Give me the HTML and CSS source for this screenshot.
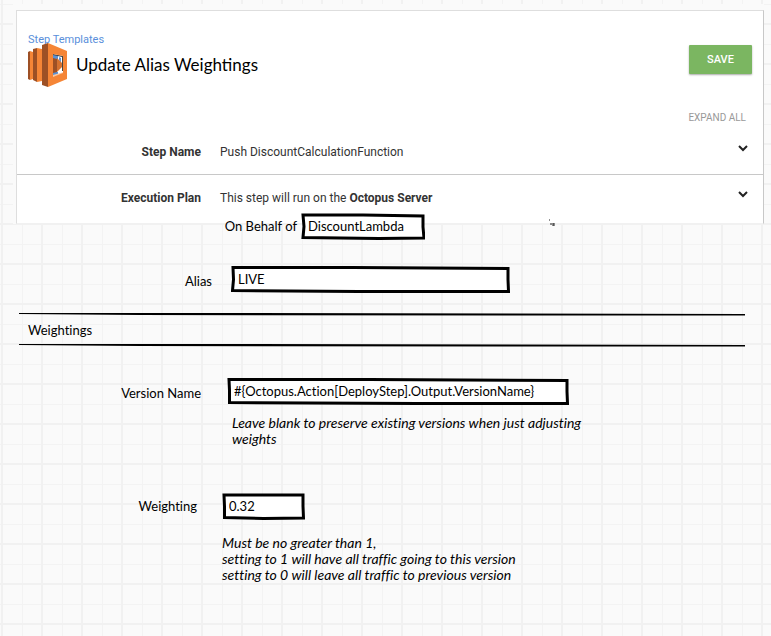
FILE: index.html
```html
<!DOCTYPE html>
<html lang="en">
<head>
<meta charset="utf-8">
<title>Update Alias Weightings</title>
<link rel="stylesheet" href="styles.css">
</head>
<body>
<div class="frame">
  <main class="card">
    <header class="head">
      <div class="intro">
        <a class="crumb" href="#">Step Templates</a>
        <div class="title">
          <svg class="logo" viewBox="0 0 39 44" aria-hidden="true">
            <path fill="#9d5025" d="M0 9l2-1v29l-2-1zM5 6l4-1v34l-4-2zM14 2l6-2v44l-6-2z"/>
            <path fill="#f58536" d="M2 8l3 1v27l-3 1zM9 5l5 1v32l-5 1z"/>
            <path fill="#fff" d="M24 10l12 3v18l-12 4z"/>
            <path fill="#5b91d3" d="M25 12h5v4h-5zM25 29h5v2l-5 3zM31 14l2 1v5l-2-3z"/>
            <path fill="#9d5025" d="M25 15l4 1v13l-4 1z"/>
            <path fill="#d5712f" d="M29 15l7 7-7 7z"/>
            <path fill="#fbc9a3" d="M25 32l11-3v2l-11 4z"/>
            <path fill="#444" d="M25 11l10 2v15h-1V14l-9-2z"/>
            <path fill="#f58536" fill-rule="evenodd" d="M20 0l19 8v28l-19 8zM25 11v23l10-4V13z"/>
          </svg>
          <h1>Update Alias Weightings</h1>
        </div>
      </div>
      <button class="save" type="button">SAVE</button>
    </header>
    <button class="expand" type="button">EXPAND ALL</button>
    <div class="summary">
      <strong class="term">Step Name</strong>
      <span class="value">Push DiscountCalculationFunction</span>
      <button class="toggle" type="button" aria-label="Expand step name"><svg viewBox="0 0 10 7"><path d="M1 1l4 4 4-4"/></svg></button>
    </div>
    <div class="summary plan">
      <strong class="term">Execution Plan</strong>
      <span class="value">This step will run on the <strong>Octopus Server</strong></span>
      <button class="toggle" type="button" aria-label="Expand execution plan"><svg viewBox="0 0 10 7"><path d="M1 1l4 4 4-4"/></svg></button>
    </div>
  </main>
</div>
<form class="form">
  <div class="row behalf">
    <label for="behalf">On Behalf of</label>
    <span class="box">
      <svg viewBox="0 0 124 27" preserveAspectRatio="none" aria-hidden="true"><path d="M2 2h60l60 1v11l1 11-45 .5-76-1 1-11z"/></svg>
      <input id="behalf" value="DiscountLambda">
    </span>
    <svg class="speck" viewBox="0 0 8 8" aria-hidden="true"><path d="M1 1h1M3 4v2M5 4v3M6 4v3"/></svg>
  </div>
  <div class="row alias">
    <label for="alias">Alias</label>
    <span class="box">
      <svg viewBox="0 0 279 27" preserveAspectRatio="none" aria-hidden="true"><path d="M2 1.500h120l155 1v11l.5 12-150 0-126-1 1-11z"/></svg>
      <input id="alias" value="LIVE">
    </span>
  </div>
  <h2 class="section">
    <svg class="rule" viewBox="0 0 726 3" preserveAspectRatio="none" aria-hidden="true"><path d="M0 0h30l140 0 556 1v1.500H500L120 2 0 1z"/></svg>
    <span>Weightings</span>
    <svg class="rule" viewBox="0 0 726 3" preserveAspectRatio="none" aria-hidden="true"><path d="M0 0h30l140 0 556 1v1.500H500L120 2 0 1z"/></svg>
  </h2>
  <div class="row version">
    <label for="version">Version Name</label>
    <span class="box">
      <svg viewBox="0 0 342 27" preserveAspectRatio="none" aria-hidden="true"><path d="M2 1.500h140l198 1v11l.5 12-150 0-188-1 0-12z"/></svg>
      <input id="version" value="#{Octopus.Action[DeployStep].Output.VersionName}">
    </span>
  </div>
  <p class="hint version-hint">Leave blank to preserve existing versions when just adjusting<br>weights</p>
  <div class="row weight">
    <label for="weight">Weighting</label>
    <span class="box">
      <svg viewBox="0 0 83 27" preserveAspectRatio="none" aria-hidden="true"><path d="M2 2h79v11l.5 12-40 .5-39-1 0-11z"/></svg>
      <input id="weight" value="0.32">
    </span>
  </div>
  <p class="hint weight-hint">Must be no greater than 1,<br>setting to 1 will have all traffic going to this version<br>setting to 0 will leave all traffic to previous version</p>
</form>
</body>
</html>
```
FILE: styles.css
```css
* { box-sizing: border-box; }
body {
  margin: 0;
  min-height: 100vh;
  color: #000;
  font: 13px/16px Lato, sans-serif;
  font-variant-ligatures: none;
  background-color: #fafafa;
  background-image:
    linear-gradient(90deg, #f1f1f1 2px, transparent 2px),
    linear-gradient(#f1f1f1 2px, transparent 2px),
    linear-gradient(90deg, #f3f3f3 1px, transparent 1px),
    linear-gradient(#f3f3f3 1px, transparent 1px);
  background-size: 40px 40px;
  background-position: 1px 0, 0 23px, 22px 0, 0 4px;
}
button { border: 0; padding: 0; background: none; font-family: Roboto, sans-serif; }
.frame {
  padding: 6px 0 0 4px;
  margin: 0 7px 0 13px;
  background: #fafafa;
  background-clip: padding-box;
  border-top: 4px solid transparent;
}
.card {
  background: #fff;
  border: 1px solid #dedede;
  border-right-color: #c8c8c8;
  border-bottom-color: #f1f1f1;
  margin-left: -1px;
  font: 12px/16px Roboto, sans-serif;
  color: #333;
}
.head { display: flex; justify-content: space-between; padding: 21px 11px 0; }
.crumb { display: block; color: #5a8fdb; font-size: 11px; text-decoration: none; }
.title { display: flex; align-items: center; gap: 9px; margin-top: -5px; }
.logo { width: 39px; height: 44px; }
h1 { margin: 0; color: #000; font: 17px/20px Lato, sans-serif; }
.save {
  width: 63px; height: 29px; margin-top: 13px;
  color: #fff; background: #7bb661; border-radius: 1px;
  font-size: 11px; font-weight: 500;
  box-shadow: 0 1px 2px #aaa;
}
.expand { display: block; margin: 23px 17px 0 auto; color: #999; font-size: 10px; line-height: 16px; }
.summary { display: flex; align-items: center; height: 49px; padding: 4px 15px 0 0; border-bottom: 1px solid #c8c8c8; }
.summary.plan { height: 48px; padding: 0 15px 2px 0; border: 0; }
.term { width: 184px; text-align: right; font-weight: 700; }
.value { flex: 1; margin-left: 19px; }
.toggle { width: 10px; height: 16px; }
.toggle svg { display: block; width: 10px; height: 7px; margin-bottom: 8px; fill: none; stroke: #222; stroke-width: 2; }
.form { position: relative; margin-top: -11px; }
.row { display: flex; align-items: center; }
.row label { flex: none; text-align: right; }
.box { position: relative; display: block; height: 27px; }
.box svg { position: absolute; inset: 0; width: 100%; height: 100%; fill: #fff; stroke: #000; stroke-width: 3; }
.box input {
  position: relative; display: block; width: 100%; height: 25px;
  border: 0; padding: 0 7px; background: none; outline: 0;
  font: inherit; color: #000;
}
.behalf label { width: 297px; margin-right: 4px; padding-bottom: 2px; }
.behalf .box { width: 124px; }
.speck { width: 8px; height: 8px; margin-left: 123px; margin-bottom: 8px; stroke: #222; fill: none; }
.alias { margin-top: 26px; }
.alias label { width: 212px; margin-right: 19px; padding-top: 3px; }
.alias .box { width: 279px; }
.section { margin: 20px 26px 0 19px; font-size: 13px; font-weight: 400; line-height: 28px; }
.section span { display: block; padding-left: 9px; }
.rule { display: block; width: 100%; height: 3px; }
.version { margin-top: 31px; }
.version label { width: 201px; margin-right: 26px; padding-top: 3px; }
.version .box { width: 342px; }
.weight { margin-top: 46px; }
.weight label { width: 197px; margin-right: 25px; padding-bottom: 2px; }
.weight .box { width: 83px; }
.hint { margin: 0; font-size: 14px; font-style: italic; }
.version-hint { padding: 10px 0 0 232px; }
.weight-hint { padding: 15px 0 0 222px; }
```
